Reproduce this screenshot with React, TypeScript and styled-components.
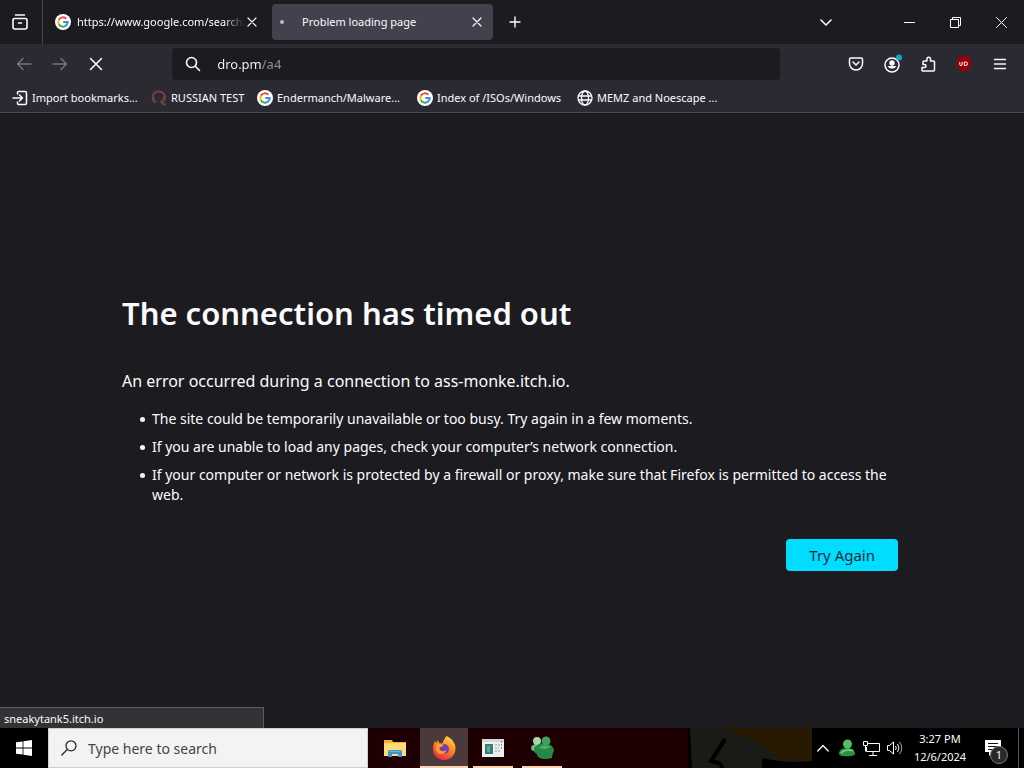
import React from "react";
import styled, { createGlobalStyle, css } from "styled-components";

const Global = createGlobalStyle`
  * { box-sizing: border-box; }
  html, body { margin: 0; background: #1c1b20; }
  body, button, input { font-family: "Noto Sans", "Open Sans", sans-serif; }
  button { border: 0; padding: 0; background: none; color: inherit; }
  svg { display: block; flex: none; }
`;

const Screen = styled.div`
  display: flex;
  flex-direction: column;
  min-height: 100vh;
  color: #fbfbfe;
  font-size: 11px;
`;

const TabStrip = styled.header`
  display: flex;
  align-items: center;
  height: 44px;
  background: #1c1b20;
`;

const FirefoxView = styled.button`
  display: grid;
  place-items: center;
  width: 43px;
  height: 44px;
  padding-right: 2px;
  border-right: 1px solid #46454e;
`;

const Tab = styled.div<{ $active?: boolean }>`
  display: flex;
  align-items: center;
  width: 221px;
  height: 36px;
  margin-left: 4px;
  padding: 0 8px;
  border-radius: 4px;
  background: ${(p) => (p.$active ? "#42414d" : "transparent")};
`;

const TabTitle = styled.span<{ $fade?: boolean }>`
  flex: 1;
  min-width: 0;
  margin-left: 6px;
  overflow: hidden;
  white-space: nowrap;
  line-height: 20px;
  ${(p) =>
    p.$fade &&
    css`
      mask-image: linear-gradient(to left, transparent, #000 20px);
    `}
`;

const TabClose = styled.button`
  display: grid;
  place-items: center;
  width: 16px;
  height: 24px;
`;

const TabSpinner = styled.span`
  width: 4px;
  height: 4px;
  margin-right: 12px;
  border-radius: 50%;
  background: #b9b8c0;
`;

const NewTab = styled.button`
  display: grid;
  place-items: center;
  width: 36px;
  height: 36px;
  margin-left: 4px;
`;

const WindowControls = styled.div`
  display: flex;
  align-items: center;
  margin-left: auto;
`;

const WindowButton = styled.button<{ $apart?: boolean }>`
  display: grid;
  place-items: center;
  width: 46px;
  height: 44px;
  margin-right: ${(p) => (p.$apart ? 37 : 0)}px;
`;

const NavBar = styled.nav`
  display: flex;
  align-items: center;
  height: 40px;
  padding: 0 6px;
  background: #2b2a33;
`;

const ToolButton = styled.button`
  display: grid;
  place-items: center;
  width: 36px;
  height: 32px;

  &:disabled {
    color: #77767f;
  }
`;

const Spring = styled.div`
  flex: 1;
`;

const AddressBar = styled.label`
  display: flex;
  flex: 10;
  align-items: center;
  gap: 16px;
  height: 32px;
  padding: 0 13px;
  border-radius: 4px;
  background: #1c1b20;
`;

const AddressInput = styled.input`
  flex: 1;
  min-width: 0;
  padding: 0;
  border: 0;
  outline: 0;
  font-size: 13px;
  line-height: 20px;
  color: transparent;
  background: linear-gradient(90deg, #fbfbfe 44px, #94939c 44px);
  background-clip: text;
`;

const BookmarksBar = styled.div`
  display: flex;
  align-items: center;
  height: 29px;
  padding: 0 12px;
  border-bottom: 1px solid #4a4952;
  background: #2b2a33;
`;

const Bookmark = styled.a<{ $width: number }>`
  display: flex;
  align-items: center;
  gap: 4px;
  width: ${(p) => p.$width}px;
  color: inherit;
  line-height: 20px;
  text-decoration: none;
  white-space: nowrap;
`;

const Page = styled.main`
  position: relative;
  display: flex;
  flex: 1;
  align-items: center;
  justify-content: center;
  padding: 58px 52px 40px 48px;
  background: #1c1b20;
`;

const ErrorPanel = styled.section`
  width: 100%;
  max-width: 776px;
`;

const ErrorTitle = styled.h1`
  margin: 0 0 32px;
  font-size: 31px;
  font-weight: 600;
  line-height: 48px;
`;

const ErrorLead = styled.p`
  margin: 0 0 16px;
  font-size: 16px;
  line-height: 24px;
`;

const ErrorList = styled.ul`
  margin: 0 0 34px;
  padding: 0 0 0 18px;
  font-size: 14px;
  line-height: 20px;
  list-style: none;
`;

const ErrorItem = styled.li`
  display: flex;
  gap: 7px;
  margin-bottom: 8px;

  &::before {
    content: "";
    flex: none;
    width: 5px;
    height: 5px;
    margin-top: 8px;
    border-radius: 50%;
    background: currentColor;
  }
`;

const Actions = styled.div`
  display: flex;
  justify-content: flex-end;
`;

const TryAgain = styled.button`
  height: 32px;
  padding: 0 23px;
  border-radius: 4px;
  background: #00ddff;
  color: #1a2b3d;
  font-size: 15px;
`;

const LinkStatus = styled.output`
  position: absolute;
  bottom: 0;
  left: 0;
  width: 264px;
  height: 21px;
  padding-left: 4px;
  border: solid #5c5c60;
  border-width: 1px 1px 0 0;
  background: #333335;
  line-height: 21px;
`;

const Taskbar = styled.footer`
  display: flex;
  height: 40px;
  background: #000;
`;

const StartButton = styled.button`
  display: grid;
  place-items: center;
  width: 48px;
`;

const TaskSearch = styled.label`
  display: flex;
  align-items: center;
  gap: 11px;
  width: 320px;
  padding: 0 12px;
  border: 1px solid #d0d0d0;
  background: #f3f3f3;
  color: #2b2b2b;
`;

const TaskSearchInput = styled.input`
  flex: 1;
  min-width: 0;
  padding: 0;
  border: 0;
  background: none;
  font-size: 14px;

  &::placeholder {
    color: #444;
    opacity: 1;
  }
`;

const TaskArea = styled.div`
  position: relative;
  display: flex;
  flex: 1;
  justify-content: space-between;
  overflow: hidden;
`;

const Wallpaper = styled.svg`
  position: absolute;
  top: 0;
  left: 0;
`;

const TaskApps = styled.div`
  position: relative;
  display: flex;
  gap: 1px;
  padding-left: 3px;
`;

const TaskApp = styled.button<{ $state?: "open" | "focused" }>`
  display: grid;
  place-items: center;
  width: 48px;
  height: 40px;
  background: ${(p) => (p.$state === "focused" ? "#4b3a3c" : "transparent")};

  &::after {
    content: "";
    position: absolute;
    bottom: 0;
    width: ${(p) => (p.$state === "focused" ? 48 : p.$state ? 40 : 0)}px;
    height: 2px;
    background: #f8d3ae;
  }
`;

const Tray = styled.div`
  position: relative;
  display: flex;
  align-items: center;
`;

const TrayButton = styled.button`
  display: grid;
  place-items: center;
  width: 24px;
  height: 40px;
`;

const Clock = styled.time`
  width: 66px;
  font-size: 11px;
  line-height: 18px;
  text-align: center;
`;

const Notifications = styled.button`
  position: relative;
  display: grid;
  place-items: center;
  width: 45px;
  height: 40px;
  padding-right: 6px;
`;

const Badge = styled.span`
  position: absolute;
  right: 10px;
  bottom: 4px;
  width: 18px;
  height: 18px;
  border: 1px solid #77777b;
  border-radius: 50%;
  background: #29292b;
  font-size: 11px;
  line-height: 16px;
  text-align: center;
`;

const ShowDesktop = styled.button`
  width: 6px;
  height: 40px;
  border-left: 1px solid #55555a;
`;

type LineProps = { d: string; size?: number; width?: number };

const Line = ({ d, size = 16, width = 1.4 }: LineProps) => (
  <svg width={size} height={size} viewBox={`0 0 ${size} ${size}`} fill="none" stroke="currentColor" strokeWidth={width} strokeLinecap="round" strokeLinejoin="round" aria-hidden>
    <path d={d} />
  </svg>
);

const GoogleIcon = () => (
  <svg width="16" height="16" viewBox="0 0 16 16" fill="none" strokeWidth="2" aria-hidden>
    <circle cx="8" cy="8" r="8" fill="#fff" />
    <path d="M11.3 4.7A4.7 4.7 0 0 0 3.9 5.7" stroke="#ea4335" />
    <path d="M3.9 5.7a4.7 4.7 0 0 0 0 4.6" stroke="#fbbc05" />
    <path d="M3.9 10.3a4.7 4.7 0 0 0 7.1 1.3" stroke="#34a853" />
    <path d="M11 11.6A4.6 4.6 0 0 0 12.7 8H8.2" stroke="#4285f4" />
  </svg>
);

const ImportIcon = () => <Line width={1.5} d="M5.5 4V2.5a1 1 0 0 1 1-1H13a1.5 1.5 0 0 1 1.5 1.5v10a1.5 1.5 0 0 1-1.5 1.5H6.5a1 1 0 0 1-1-1V12M1 8h9.5M7.5 5l3 3-3 3" />;

const HeadsetIcon = () => (
  <svg width="16" height="16" viewBox="0 0 16 16" fill="none" stroke="#71443f" aria-hidden>
    <path strokeWidth="2" d="M4 12C1 9.500 .8 5.500 3.500 3c3-2.500 7.500-2 9.500 1 1.500 2.500 1 5.500-1 7.500" />
    <path strokeWidth="2" d="M2.500 7v4l2.500 1.500M9.500 11l3.500 3.500h2M12.500 7v4" />
  </svg>
);

const GlobeIcon = () => (
  <svg width="16" height="16" viewBox="0 0 16 16" fill="none" stroke="currentColor" strokeWidth="1.3" aria-hidden>
    <circle cx="8" cy="8" r="7" />
    <ellipse cx="8" cy="8" rx="3.5" ry="7" />
    <path d="M1 6h14M1 10h14" />
  </svg>
);

const AccountIcon = () => (
  <svg width="20" height="20" viewBox="0 0 20 20" aria-hidden>
    <circle cx="10" cy="11" r="7" fill="none" stroke="currentColor" strokeWidth="1.5" />
    <circle cx="10" cy="9" r="2.7" fill="currentColor" />
    <path d="M5.500 12h9a5 5 0 0 1-9 0Z" fill="currentColor" />
    <circle cx="17" cy="3.500" r="3" fill="#1aa5c2" />
  </svg>
);

const BlockerIcon = () => (
  <svg width="16" height="16" viewBox="0 0 16 16" aria-hidden>
    <path d="M8 0l7 2v5c0 4-2.500 7-7 9-4.500-2-7-5-7-9V2Z" fill="#98000a" />
    <path d="M3.800 6v2.500q0 1 1.200 1t1.200-1V6M8.300 6v3.500h1.200q2 0 2-1.750T9.500 6Z" fill="none" stroke="#fff" />
  </svg>
);

const RestoreIcon = () => (
  <svg width="11" height="11" viewBox="0 0 11 11" fill="none" stroke="currentColor" aria-hidden>
    <path d="M.5 2.500h8v8h-8ZM2.500 2.500v-2h8v8h-2" />
  </svg>
);

const WindowsLogo = () => (
  <svg width="16" height="16" viewBox="0 0 16 16" fill="#fff" aria-hidden>
    <path d="M0 2.300 6.600 1.400v6.200H0ZM7.400 1.300 16 0v7.600H7.400ZM0 8.400h6.600v6.200L0 13.700ZM7.400 8.400H16V16l-8.600-1.300Z" />
  </svg>
);

const FolderIcon = () => (
  <svg width="22" height="20" viewBox="0 0 22 20" aria-hidden>
    <path d="M0 2h8l1 2h13v14H0Z" fill="#e9b23a" />
    <path d="M0 5h22v13H0Z" fill="#fbdc75" />
    <path d="M4 19v-5q0-2 2-2h10q2 0 2 2v5h-4v-3H8v3Z" fill="#3c94cd" />
    <path d="M6 13.500h10" stroke="#6fb4dc" />
  </svg>
);

const FirefoxIcon = () => (
  <svg width="24" height="24" viewBox="0 0 24 24" aria-hidden>
    <defs>
      <linearGradient id="fox" x1=".8" y1="0" x2=".3" y2="1">
        <stop offset="0" stopColor="#ffe04a" />
        <stop offset=".45" stopColor="#ff8a20" />
        <stop offset="1" stopColor="#e9264f" />
      </linearGradient>
    </defs>
    <path fill="url(#fox)" d="M14.500 0c4 2 6 4 7 6 1.500 2 2 4 2 6.500C23.500 19 18.500 24 12 24S1 19 1 13c0-4 1-6 2-8l1 2 2-3 1 3 3 1c1-2 2-5 4.500-8Z" />
    <circle cx="12" cy="13" r="5" fill="#7540b5" />
    <path fill="#ff9d29" d="M5 8c3-1 5-.5 7 1l-3 2c-2 0-2 2-1 3 2 2 5 1 6 0 0 4-6 6-9 2-2-3-1-6 0-8Z" />
  </svg>
);

const WindowAppIcon = () => (
  <svg width="22" height="18" viewBox="0 0 22 18" aria-hidden>
    <path d="M0 0h22v18H0Z" fill="#eef0ee" />
    <path d="M0 0h22v3H0Z" fill="#d3d7d7" />
    <path d="M3 5h8v10H3Z" fill="#397b7c" />
    <path d="M5 7h3v6H5Z" fill="#67a48f" />
    <path d="M13 6h5M13 9h4M13 12h5M19.500 2v9" stroke="#8a9696" strokeDasharray="2 1" />
  </svg>
);

const BuddiesIcon = () => (
  <svg width="24" height="24" viewBox="0 0 24 24" aria-hidden>
    <ellipse cx="7" cy="12" rx="6" ry="4" fill="#78bb83" />
    <circle cx="7" cy="5" r="4" fill="#a6d7a9" />
    <path d="M4 12c4-5 8-5 12-4 5 0 8 3 8 7-1 2-2 4-2 7-7 2-15 1-15-4-3-1-3-3-3-6Z" fill="#258846" />
    <circle cx="16" cy="5" r="4.500" fill="#3aa45b" />
    <path d="M9 11c4-2 8-2 12 0-4 2-8 3-12 0Z" fill="#4db168" />
  </svg>
);

const BuddyTrayIcon = () => (
  <svg width="16" height="18" viewBox="0 0 16 18" aria-hidden>
    <path d="M0 15c0-4 3-6 8-6s8 2 8 6c0 3-16 3-16 0Z" fill="#269343" />
    <circle cx="8.500" cy="5" r="4.500" fill="#55bd62" />
    <path d="M2 14c3-3 9-4 12-2" stroke="#83d987" strokeWidth="1.5" fill="none" />
  </svg>
);

const NetworkIcon = () => (
  <svg width="17" height="16" viewBox="0 0 17 16" fill="none" stroke="#fff" aria-hidden>
    <path d="M5 3.500h11.500v8H3.500V7M10 12v3M6 15.500h8M.5 1.500h4v4h-4ZM2.500 5.500v6" />
  </svg>
);

const VolumeIcon = () => (
  <svg width="16" height="14" viewBox="0 0 16 14" fill="none" stroke="#fff" aria-hidden>
    <path d="M.5 4.500h2l4-3.500v12l-4-3.500h-2ZM8.500 5q1.500 2 0 4M10.500 3q3 4 0 8" />
    <path d="M12.500 1q4.500 6 0 12" stroke="#aaa" />
  </svg>
);

const NoticeIcon = () => (
  <svg width="16" height="16" viewBox="0 0 16 16" aria-hidden>
    <path d="M0 0h16v12H8l-4 4v-4H0Z" fill="#fff" />
    <path d="M3 3.500h10M3 6.500h10M3 9.500h7" stroke="#111" />
  </svg>
);

const bookmarks = [
  { label: "Import bookmarks...", icon: <ImportIcon />, width: 139 },
  { label: "RUSSIAN TEST", icon: <HeadsetIcon />, width: 106 },
  { label: "Endermanch/Malware...", icon: <GoogleIcon />, width: 160 },
  { label: "Index of /ISOs/Windows", icon: <GoogleIcon />, width: 160 },
  { label: "MEMZ and Noescape ...", icon: <GlobeIcon />, width: 160 },
];

const closePath = "M1 1l8 8M9 1L1 9";

export default function App() {
  return (
    <Screen>
      <Global />
      <TabStrip>
        <FirefoxView aria-label="Firefox View">
          <Line width={1.6} d="M3.500 1h9M2.500 4.500h11a1.500 1.500 0 0 1 1.500 1.500v7a2 2 0 0 1-2 2H3a2 2 0 0 1-2-2V6a1.500 1.500 0 0 1 1.500-1.500ZM6.500 9h3" />
        </FirefoxView>
        <Tab>
          <GoogleIcon />
          <TabTitle $fade>https://www.google.com/search</TabTitle>
          <TabClose aria-label="Close tab"><Line size={10} width={1.2} d={closePath} /></TabClose>
        </Tab>
        <Tab $active>
          <TabSpinner />
          <TabTitle>Problem loading page</TabTitle>
          <TabClose aria-label="Close tab"><Line size={10} width={1.2} d={closePath} /></TabClose>
        </Tab>
        <NewTab aria-label="New tab"><Line size={12} d="M6 1v10M1 6h10" /></NewTab>
        <WindowControls>
          <WindowButton $apart aria-label="List all tabs"><Line size={12} width={1.6} d="M1 4l5 5 5-5" /></WindowButton>
          <WindowButton aria-label="Minimize"><Line size={11} width={1} d="M.5 5.500h10" /></WindowButton>
          <WindowButton aria-label="Restore"><RestoreIcon /></WindowButton>
          <WindowButton aria-label="Close"><Line size={11} width={1} d="M.5 .5l10 10M10.500 .5l-10 10" /></WindowButton>
        </WindowControls>
      </TabStrip>
      <NavBar>
        <ToolButton disabled aria-label="Back"><Line d="M15 8H1.500M7 2.500L1.500 8 7 13.500" /></ToolButton>
        <ToolButton disabled aria-label="Forward"><Line d="M1 8h13.500M9 2.500L14.500 8 9 13.500" /></ToolButton>
        <ToolButton aria-label="Stop"><Line width={1.6} d="M2.500 2.500l11 11M13.500 2.500l-11 11" /></ToolButton>
        <Spring />
        <AddressBar>
          <Line width={1.6} d="M6.500 1.500a5 5 0 1 1 0 10 5 5 0 0 1 0-10M10 10l4.500 4.500" />
          <AddressInput aria-label="Address" defaultValue="dro.pm/a4" />
        </AddressBar>
        <Spring />
        <ToolButton aria-label="Save to Pocket"><Line width={1.5} d="M3 2h10a1.500 1.500 0 0 1 1.500 1.500V7.500a6.500 6.500 0 0 1-13 0v-4A1.500 1.500 0 0 1 3 2ZM5 6l3 3 3-3" /></ToolButton>
        <ToolButton aria-label="Account"><AccountIcon /></ToolButton>
        <ToolButton aria-label="Extensions"><Line width={1.5} d="M2.500 15h11a1 1 0 0 0 1-1V6a1 1 0 0 0-1-1H10.500V3a1.800 1.800 0 0 0-3.600 0v2H4a1 1 0 0 0-1 1v2.500h1.500a1.500 1.500 0 0 1 0 3H2V14.500" /></ToolButton>
        <ToolButton aria-label="Ad blocker"><BlockerIcon /></ToolButton>
        <ToolButton aria-label="Menu"><Line d="M2.500 3.500h11M2.500 8h11M2.500 12.500h11" /></ToolButton>
      </NavBar>
      <BookmarksBar>
        {bookmarks.map((b) => (
          <Bookmark key={b.label} href="#" $width={b.width}>{b.icon}{b.label}</Bookmark>
        ))}
      </BookmarksBar>
      <Page>
        <ErrorPanel>
          <ErrorTitle>The connection has timed out</ErrorTitle>
          <ErrorLead>An error occurred during a connection to ass-monke.itch.io.</ErrorLead>
          <ErrorList>
            <ErrorItem>The site could be temporarily unavailable or too busy. Try again in a few moments.</ErrorItem>
            <ErrorItem>If you are unable to load any pages, check your computer’s network connection.</ErrorItem>
            <ErrorItem>If your computer or network is protected by a firewall or proxy, make sure that Firefox is permitted to access the web.</ErrorItem>
          </ErrorList>
          <Actions><TryAgain>Try Again</TryAgain></Actions>
        </ErrorPanel>
        <LinkStatus>sneakytank5.itch.io</LinkStatus>
      </Page>
      <Taskbar>
        <StartButton aria-label="Start"><WindowsLogo /></StartButton>
        <TaskSearch>
          <Line width={1.3} d="M10 .8a5 5 0 1 1 0 10 5 5 0 0 1 0-10M6.300 9.500L.8 15" />
          <TaskSearchInput aria-label="Search" placeholder="Type here to search" />
        </TaskSearch>
        <TaskArea>
          <Wallpaper width="656" height="40" viewBox="0 0 656 40" aria-hidden>
            <path d="M0 0h322v40H0Z" fill="#1e0002" />
            <path d="M322 0h118v40H322Z" fill="#1a1b16" />
            <path d="M354 0h90v34q-16-2-32-3-20-18-58-31Z" fill="#271902" />
            <path d="M394 30q30 7 58 2v8h-58Z" fill="#000" />
            <path d="M357 11l-14 22 8 2 4 5" fill="none" stroke="#000" strokeWidth="4" />
            <path d="M320 0h2l2 40h-4Z" fill="#000" />
          </Wallpaper>
          <TaskApps>
            <TaskApp aria-label="File Explorer"><FolderIcon /></TaskApp>
            <TaskApp $state="focused" aria-label="Firefox"><FirefoxIcon /></TaskApp>
            <TaskApp $state="open" aria-label="Program"><WindowAppIcon /></TaskApp>
            <TaskApp $state="open" aria-label="Messenger"><BuddiesIcon /></TaskApp>
          </TaskApps>
          <Tray>
            <TrayButton aria-label="Show hidden icons"><Line size={12} width={1.3} d="M.8 9L6 3.500 11.200 9" /></TrayButton>
            <TrayButton aria-label="Messenger status"><BuddyTrayIcon /></TrayButton>
            <TrayButton aria-label="Network"><NetworkIcon /></TrayButton>
            <TrayButton aria-label="Volume"><VolumeIcon /></TrayButton>
            <Clock>3:27 PM<br />12/6/2024</Clock>
            <Notifications aria-label="Notifications"><NoticeIcon /><Badge>1</Badge></Notifications>
            <ShowDesktop aria-label="Show desktop" />
          </Tray>
        </TaskArea>
      </Taskbar>
    </Screen>
  );
}
